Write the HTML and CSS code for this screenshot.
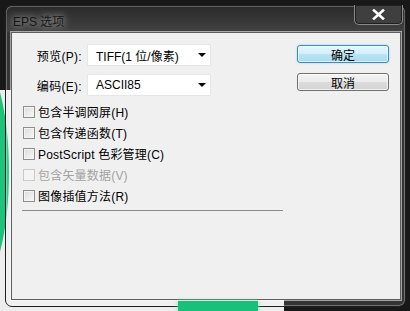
FILE: index.html
```html
<!DOCTYPE html>
<html lang="zh-CN">
<head>
  <meta charset="UTF-8">
  <title>EPS 选项</title>
  <meta name="viewport" content="width=device-width, initial-scale=1">
  <link rel="stylesheet" href="styles.css">
</head>
<body>

  <div class="desktop">
    <!-- bits of the desktop showing through the glass frame -->
    <div class="light-area"></div>
    <div class="blob-left"></div>

    <div class="window">
      <div class="titlebar">
        <span class="title">EPS 选项</span>
        <button class="close" aria-label="关闭">
          <svg width="13" height="11" viewBox="0 0 13 11">
            <path d="M2 1.5 L11 9.5 M11 1.5 L2 9.5" stroke="#fff" stroke-width="2.6" stroke-linecap="square"/>
          </svg>
        </button>
      </div>

      <div class="panel">
        <div class="main">
          <div class="field">
            <label for="preview">预览(P):</label>
            <div class="select" id="preview">
              <span>TIFF(1 位/像素)</span>
              <i class="arrow"></i>
            </div>
          </div>

          <div class="field">
            <label for="encoding">编码(E):</label>
            <div class="select" id="encoding">
              <span>ASCII85</span>
              <i class="arrow"></i>
            </div>
          </div>

          <div class="checks">
            <div class="check"><span class="box"></span>包含半调网屏(H)</div>
            <div class="check"><span class="box"></span>包含传递函数(T)</div>
            <div class="check"><span class="box"></span>PostScript 色彩管理(C)</div>
            <div class="check disabled"><span class="box"></span>包含矢量数据(V)</div>
            <div class="check"><span class="box"></span>图像插值方法(R)</div>
          </div>

          <div class="separator"></div>
        </div>

        <div class="side">
          <button class="btn default">确定</button>
          <button class="btn">取消</button>
        </div>
      </div>
    </div>

    <div class="blob-bottom"></div>
  </div>

</body>
</html>
```

FILE: styles.css
```css
/* General Styles */
body {
  margin: 0;
  padding: 0;
  font-family: 'Liberation Sans', 'Noto Sans CJK SC', sans-serif;
  font-size: 12px;
  color: #000;
  background-color: #161616;
}

.desktop {
  position: relative;
  width: 410px;
  height: 311px;
  overflow: hidden;
  background-color: #181818;
}

.light-area {
  position: absolute;
  left: 0;
  top: 90px;
  width: 284px;
  height: 221px;
  background-color: #ededed;
}

/* Window frame (glass: mostly see-through) */
.window {
  position: absolute;
  left: 5px;
  top: 5px;
  width: 401px;
  height: 302px;
  box-sizing: border-box;
  display: flex;
  flex-direction: column;
  padding: 0 4px 6px 5px;
  border: 1px solid #1e1e1e;
  border-radius: 7px;
  background-color: rgba(255, 255, 255, 0.12);
  box-shadow: inset 0 0 0 1px rgba(255, 255, 255, 0.3);
}

.titlebar {
  height: 26px;
  display: flex;
  justify-content: space-between;
  align-items: flex-start;
  margin: 0 -4px 0 -5px;
  padding: 0 2px 0 7px;
  border-radius: 6px 6px 0 0;
  background-color: #363636;
  background-image: linear-gradient(to bottom, #2a2a2a, #424242);
  box-shadow: inset 0 1px 0 rgba(255, 255, 255, 0.25), inset 1px 0 0 rgba(255, 255, 255, 0.2), inset -1px 0 0 rgba(255, 255, 255, 0.2);
}

.title {
  margin-top: 6px;
  font-size: 12px;
  color: #161616;
  text-shadow: 0 0 6px rgba(255, 255, 255, 0.6), 0 0 12px rgba(255, 255, 255, 0.4);
}

.close {
  width: 49px;
  height: 20px;
  margin-top: -1px;
  padding: 0;
  display: flex;
  align-items: center;
  justify-content: center;
  background-color: #3f3f3f;
  border: 1px solid #8a8a8a;
  border-top: none;
  border-radius: 0 0 5px 5px;
  box-shadow: inset 0 0 0 1px rgba(0, 0, 0, 0.5);
}

/* Client area */
.panel {
  flex: 1;
  display: flex;
  padding: 11px 0 0 11px;
  background-color: #f0f0f0;
  border: 1px solid #5d5d5d;
  box-shadow: 0 0 0 1px rgba(255, 255, 255, 0.55);
}

.main {
  width: 274px;
}

.field {
  display: grid;
  grid-template-columns: 70px 124px;
  column-gap: 5px;
  align-items: center;
  margin-left: -11px;
  margin-bottom: 8px;
}

.field label {
  text-align: right;
  letter-spacing: 0.3px;
}

.select {
  height: 22px;
  box-sizing: border-box;
  display: flex;
  align-items: center;
  justify-content: space-between;
  padding: 0 4px 0 8px;
  background-color: #fff;
  border: 1px solid #e6e6e6;
}

.arrow {
  width: 0;
  height: 0;
  border-left: 4px solid transparent;
  border-right: 4px solid transparent;
  border-top: 4px solid #000;
}

.checks {
  margin-top: -3px;
}

.check {
  height: 21px;
  display: flex;
  align-items: center;
  gap: 3px;
  letter-spacing: 0.2px;
}

.box {
  width: 10px;
  height: 10px;
  border: 1px solid #8e8f8f;
  background: linear-gradient(135deg, #dcdcdc, #f8f8f8);
  box-shadow: inset 0 0 0 1px #f4f4f4;
}

.check.disabled {
  color: #a3a3a3;
}

.check.disabled .box {
  border-color: #cacaca;
  background: #f4f4f4;
}

.separator {
  margin: 4px 0 0 -1px;
  width: 261px;
  border-top: 1px solid #8a8a8a;
}

/* Buttons */
.side {
  display: flex;
  flex-direction: column;
  gap: 10px;
  margin-top: 1px;
}

.btn {
  width: 92px;
  height: 18px;
  padding: 0;
  font-family: 'Liberation Sans', 'Noto Sans CJK SC', sans-serif;
  font-size: 12px;
  color: #000;
  border: 1px solid #707070;
  border-radius: 3px;
  background: linear-gradient(to bottom, #f4f4f4 0%, #ebebeb 50%, #dcdcdc 51%, #d4d4d4 100%);
  box-shadow: inset 0 0 0 1px rgba(255, 255, 255, 0.7);
}

.btn.default {
  border-color: #3c8db8;
  background: linear-gradient(to bottom, #e4f6fc 0%, #d2effa 50%, #b9e4f5 51%, #a8dcf2 100%);
  box-shadow: inset 0 0 0 1px rgba(255, 255, 255, 0.6), 0 0 2px #7fd0ef;
}

/* Green shapes on the desktop */
.blob-left {
  position: absolute;
  left: -49px;
  top: 62px;
  width: 58px;
  height: 220px;
  border-radius: 50%;
  background-color: #1bc47a;
}

.blob-bottom {
  position: absolute;
  left: 178px;
  top: 301px;
  width: 80px;
  height: 12px;
  background-color: #18c079;
  box-shadow: 0 0 4px #7ee3b0;
}
```
